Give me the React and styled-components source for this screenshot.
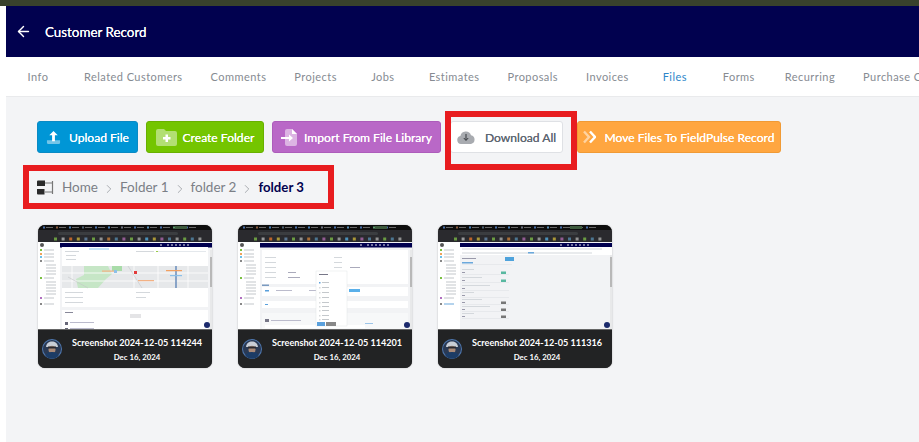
import React from 'react';
import styled, { createGlobalStyle } from 'styled-components';
import { ArrowLeft, ChevronRight } from 'lucide-react';

const TABS = ['Info', 'Related Customers', 'Comments', 'Projects', 'Jobs', 'Estimates', 'Proposals', 'Invoices', 'Files', 'Forms', 'Recurring', 'Purchase Orders'];

const FILES = [
    { name: 'Screenshot 2024-12-05 114244', date: 'Dec 16, 2024', shot: 'map' },
    { name: 'Screenshot 2024-12-05 114201', date: 'Dec 16, 2024', shot: 'form' },
    { name: 'Screenshot 2024-12-05 111316', date: 'Dec 16, 2024', shot: 'settings' },
];

const TAB_COLORS = ['#4a6fa5', '#8a5a3a', '#4a7fb5', '#50606f', '#4a6fa5', '#4a7fb5', '#6a6f7a', '#4a6fa5', '#5a8fb5', '#4a6fa5', '#60a070', '#4a6fa5'];
const BOOKMARKS = ['#7ab648', '#b5b5b5', '#e0702a', '#c9b13a', '#68a', '#7ab648', '#aaa', '#c9803a', '#58a', '#a6a', '#7ab648', '#aaa', '#5ad', '#c9b13a', '#a6a', '#58a', '#aaa', '#7ab648', '#58a', '#aaa'];
const SIDE_ROWS = [7, 11, 14, 18, 22, 25, 28, 31, 35, 39, 42, 45, 48, 51, 55, 61];

// small browser window drawn for the file previews
const Shot = ({ kind }) => (
    <ShotSvg viewBox="0 0 174 105" preserveAspectRatio="none">
        <defs>
            <filter id={`soft-${kind}`} x="0" y="0" width="100%" height="100%">
                <feGaussianBlur stdDeviation="0.45" />
            </filter>
        </defs>
        <g filter={`url(#soft-${kind})`}>
            <rect width="174" height="105" fill="#f2f3f5" />
            <rect width="174" height="17" fill="#2a2c2f" />
            <rect width="174" height="5" fill="#0d0e10" />
            {TAB_COLORS.map((c, i) => (
                <g key={i}>
                    <rect x={5 + i * 13} y="1.500" width="2" height="2" fill={c} />
                    <rect x={8 + i * 13} y="2" width="7" height="1" fill="#666" />
                </g>
            ))}
            <rect x={kind === 'settings' ? 132 : 137} y="1" width="12" height="3" fill="#3d5a3d" />
            <rect x="20" y="7" width="120" height="3" rx="1.500" fill="#3a3d40" />
            {BOOKMARKS.map((c, i) => (
                <rect key={i} x={16 + i * 7.600} y="12.500" width="3" height="3" fill={c} fillOpacity=".8" />
            ))}
            <rect x="22" y="18" width="152" height="4.500" fill="#01014f" />
            {[120, 127, 131, 135, 139, 143, 147].map(x => (
                <rect key={x} x={x + 2} y="19" width="2" height="2" rx="1" fill="#9a9ab8" />
            ))}
            <rect x="0" y="17" width="22" height="88" fill="#fff" />
            <circle cx="4" cy="20" r="2" fill="#555" />
            {SIDE_ROWS.map((y, i) => {
                const icon = [0, 1, 2, 3, 8, 14, 15].indexOf(i);
                return (
                    <g key={y}>
                        {icon >= 0 && (
                            <rect x="2" y={y + 17} width="2" height="2" fill={['#7ac043', '#f0a35a', '#6cc0e8', '#888', '#7ac043', '#b070c0', '#888'][icon]} />
                        )}
                        <rect x={icon >= 0 ? 6 : 8} y={y + 17.500} width="10" height="1" fill={kind === 'settings' && i === 15 ? '#6aa8dc' : '#c4c8cc'} />
                    </g>
                );
            })}
            <rect x="172" y="25" width="2" height="80" fill="#e8e9ea" />
            <rect x="172" y="32" width="2" height="30" fill="#b8b8b8" />
            {kind === 'map' && (
                <g>
                    <rect x="24" y="22" width="146" height="60" fill="#fff" />
                    <rect x="27" y="26" width="14" height="1" fill="#d4d8dc" />
                    <rect x="28" y="30" width="10" height="1" fill="#d4d8dc" />
                    <rect x="28" y="34" width="10" height="1" fill="#d4d8dc" />
                    <rect x="51" y="23.500" width="20" height="1" fill="#8cc8ee" />
                    <rect x="98" y="26" width="18" height="1" fill="#d4d8dc" />
                    <rect x="118" y="26" width="50" height="1" fill="#e4e8ec" />
                    <rect x="118" y="26" width="2" height="1" fill="#9c4" />
                    <rect x="24" y="41" width="146" height="22" fill="#e6e8ea" />
                    <path d="M46 41h24l4 8-6 5-8 9H40l-2-9 8-4z" fill="#c6e6c6" />
                    <rect x="74" y="41" width="10" height="5" fill="#a9dca9" />
                    <path d="M24 48h146M24 56h146M34 41v22M96 41v22M120 41v22M150 41v22" stroke="#fff" strokeWidth="0.800" />
                    <path d="M138 41v22" stroke="#5f86b8" strokeWidth="1.400" />
                    <path d="M30 52l20 11M90 41l14 22" stroke="#c4c6c8" strokeWidth="0.600" />
                    <rect x="64" y="45.500" width="12" height="1.200" fill="#f2b184" />
                    <rect x="100" y="55" width="16" height="1.200" fill="#f2b184" />
                    <rect x="128" y="45" width="16" height="1.200" fill="#f2a060" />
                    <rect x="132" y="50" width="12" height="1.200" fill="#8cc0e8" />
                    <rect x="76" y="45" width="3" height="3" fill="#8cc0e8" />
                    <rect x="96" y="46" width="3" height="3" fill="#e23b3b" />
                    <rect x="27" y="67" width="18" height="1" fill="#d4d8dc" />
                    <rect x="27" y="72" width="18" height="1" fill="#d4d8dc" />
                    <rect x="27" y="77" width="18" height="1" fill="#d4d8dc" />
                    <rect x="98" y="67" width="14" height="1" fill="#d4d8dc" />
                    <rect x="98" y="72" width="10" height="1" fill="#d4d8dc" />
                    <rect x="24" y="85" width="146" height="20" fill="#fff" />
                    <rect x="27" y="87" width="8" height="1" fill="#889" />
                    <rect x="92" y="89" width="11" height="4" fill="#e4e4e6" />
                    <rect x="27" y="97" width="3" height="3" fill="#667" />
                    <rect x="32" y="97" width="24" height="1" fill="#bbc" />
                    <rect x="27" y="103" width="3" height="2" fill="#667" />
                    <rect x="32" y="103" width="24" height="1" fill="#bbc" />
                </g>
            )}
            {kind === 'form' && (
                <g>
                    <rect x="24" y="25" width="146" height="34" fill="#fff" />
                    {[32, 37, 42, 47, 52].map(y => (
                        <g key={y}>
                            <rect x="27" y={y} width="11" height="1" fill="#d4d8dc" />
                            <rect x="96" y={y} width="8" height="1" fill="#d4d8dc" />
                        </g>
                    ))}
                    <rect x="50" y="47" width="8" height="1" fill="#aab" />
                    <rect x="50" y="52" width="12" height="1" fill="#aab" />
                    <rect x="112" y="42" width="10" height="1" fill="#aab" />
                    <rect x="24" y="62" width="146" height="9" fill="#fff" />
                    <rect x="24" y="59.500" width="7" height="1.500" fill="#7a9ac0" />
                    <rect x="27" y="65" width="4" height="1.500" fill="#5aa0dc" />
                    <rect x="38" y="65" width="16" height="1" fill="#bbc" />
                    <rect x="71" y="65" width="8" height="1" fill="#bbc" />
                    <rect x="111" y="64" width="11" height="3" fill="#5ab0ea" />
                    <rect x="24" y="76" width="146" height="7" fill="#fff" />
                    <rect x="27" y="79" width="3" height="1" fill="#5aa0dc" />
                    <rect x="24" y="88" width="146" height="17" fill="#f7f8f9" />
                    <rect x="27" y="94" width="4" height="3" fill="#778" />
                    <rect x="33" y="95" width="30" height="1" fill="#bbc" />
                    <rect x="27" y="100" width="100" height="3" fill="#fff" />
                    <rect x="78" y="46" width="31" height="55" fill="#fff" stroke="#dcdfe2" strokeWidth="0.400" />
                    <rect x="81" y="49" width="9" height="1" fill="#778" />
                    {[57, 62, 67, 72, 77, 81, 85, 90, 94].map(y => (
                        <g key={y}>
                            <rect x="81" y={y} width="1.500" height="1.500" fill={y === 57 ? '#5aa0dc' : '#d8dadc'} />
                            <rect x="84" y={y} width="7" height="1" fill="#c4c8cc" />
                        </g>
                    ))}
                    <rect x="79" y="97" width="8" height="4" fill="#5aa0dc" />
                    <rect x="88" y="97" width="10" height="4" fill="#888" />
                    <rect x="127" y="98" width="8" height="1" fill="#9cc4e8" />
                </g>
            )}
            {kind === 'settings' && (
                <g>
                    <rect x="22" y="22" width="152" height="8" fill="#fff" />
                    <rect x="24" y="23.500" width="140" height="1" fill="#d4d8dc" />
                    <rect x="24" y="27.500" width="130" height="1" fill="#d4d8dc" />
                    <rect x="90" y="27" width="6" height="1.500" fill="#6aa8dc" />
                    <rect x="24" y="33" width="14" height="1" fill="#99a" />
                    <rect x="67" y="32" width="9" height="4" fill="#4fa3dc" />
                    <rect x="24" y="37" width="11" height="1.500" fill="#6aa8dc" />
                    <rect x="24" y="39.500" width="50" height="0.500" fill="#dcdfe2" />
                    {[44, 52, 60, 67, 74, 81, 88].map((y, i) => (
                        <g key={y}>
                            <rect x="24" y={y} width={12 + (i % 3) * 8} height="1" fill="#d4d8dc" />
                            <rect x="24" y={y + 3} width="3" height="1" fill="#99a" />
                            <rect x="24" y={y + 5} width="47" height="0.500" fill="#dcdfe2" />
                            {i < 2 && <rect x="63" y={y + 2.500} width="5" height="2.500" fill="#58b8a0" />}
                            {i >= 4 && <rect x="63" y={y + 2.500} width="5" height="2.500" fill="#777" />}
                        </g>
                    ))}
                </g>
            )}
            <circle cx="169" cy="100" r="3" fill="#1a2a6c" />
            <rect x="0" y="104" width="174" height="1.500" fill="#666" />
        </g>
    </ShotSvg>
);

const Avatar = () => (
    <AvatarSvg width="20" height="20" viewBox="0 0 20 20">
        <circle cx="10" cy="10" r="10" fill="#4f78b0" />
        <circle cx="10" cy="10" r="9" fill="#2a3a55" />
        <path d="M4 8C4.500 4 7 2.500 10 2.500S15.500 4 16 8z" fill="#c9ced6" />
        <ellipse cx="10" cy="10.500" rx="3.500" ry="3.800" fill="#a98a78" />
        <path d="M6 7.500h8v2H6z" fill="#2a2a30" />
        <path d="M3.500 17c1-3.500 3.500-4 6.500-4s5.500.5 6.500 4a9 9 0 0 1-13 0z" fill="#1c3c66" />
    </AvatarSvg>
);

export default function App() {
    return (
        <>
            <GlobalStyle />
            <TopStrip />
            <Page>
                <Header>
                    <BackIcon size={17} strokeWidth={2} />
                    <HeaderTitle>Customer Record</HeaderTitle>
                </Header>
                <Tabs>
                    {TABS.map(tab => (
                        <Tab key={tab} $active={tab === 'Files'}>{tab}</Tab>
                    ))}
                </Tabs>
                <Content>
                    <Toolbar>
                        <ActionButton $bg="#0096d6" $border="#0a8ac4" $width={101}>
                            <svg width="15" height="15" viewBox="0 0 16 16">
                                <path d="M1 11h14v2.500A1.500 1.500 0 0 1 13.500 15h-11A1.500 1.500 0 0 1 1 13.500z" fill="#fff" fillOpacity=".45" />
                                <path d="M8 1l4.500 4.500H9.500V12h-3V5.500h-3z" fill="#fff" />
                            </svg>
                            Upload File
                        </ActionButton>
                        <ActionButton $bg="#74c500" $border="#68b000" $gap={6} $width={118}>
                            <svg width="21" height="17" viewBox="0 0 21 17">
                                <path d="M0 2a2 2 0 0 1 2-2h6l2 2h9a2 2 0 0 1 2 2v11a2 2 0 0 1-2 2H2a2 2 0 0 1-2-2z" fill="#fff" fillOpacity=".45" />
                                <path d="M9.500 5.500h2.500V8h2.500v2.500H12V13H9.500v-2.500H7V8h2.500z" fill="#fff" />
                            </svg>
                            Create Folder
                        </ActionButton>
                        <ActionButton $bg="#b968c7" $border="#ad5cbb" $gap={7} $width={169}>
                            <svg width="16" height="17" viewBox="0 0 16 17">
                                <path d="M4 2a2 2 0 0 1 2-2h5l5 5v10a2 2 0 0 1-2 2H6a2 2 0 0 1-2-2z" fill="#fff" fillOpacity=".5" />
                                <path d="M11 0l5 5h-5z" fill="#fff" />
                                <path d="M0 8h8V5.500L12 9l-4 3.500V10H0z" fill="#fff" />
                            </svg>
                            Import From File Library
                        </ActionButton>
                        <ActionButton $bg="#fff" $border="#dfe1e5" $color="#5f6773" $gap={10} $ml={9} $width={113}>
                            <svg width="18" height="14" viewBox="0 0 18 14">
                                <path d="M4 14a4 4 0 0 1-.6-7.900A5.500 5.500 0 0 1 14 5.200 4.500 4.500 0 0 1 14 14z" fill="#a8abb0" />
                                <path d="M9 4v6M6.800 8L9 10.500 11.200 8" fill="none" stroke="#33363b" strokeWidth="1" />
                            </svg>
                            Download All
                        </ActionButton>
                        <ActionButton $bg="#ffa640" $border="#f09a35" $gap={8} $ml={14} $width={204}>
                            <svg width="13" height="14" viewBox="0 0 13 14">
                                <path d="M1 1.500L6 7l-5 5.500" fill="none" stroke="#fff" strokeOpacity=".5" strokeWidth="2.400" />
                                <path d="M7 1.500L12 7l-5 5.500" fill="none" stroke="#fff" strokeWidth="2.400" />
                            </svg>
                            Move Files To FieldPulse Record
                        </ActionButton>
                    </Toolbar>
                    <Breadcrumbs>
                        <svg width="17" height="15" viewBox="0 0 17 15">
                            <path d="M0 1.500A1 1 0 0 1 1 .5h7v5.500H0zM0 9h7.500v5.500H1a1 1 0 0 1-1-1z" fill="#2b2b2b" />
                            <path d="M8 3h7.500v9H8M15.500 1v3M15.500 11v3" fill="none" stroke="#777" strokeWidth="1.200" />
                        </svg>
                        <Crumb $first>Home</Crumb>
                        <CrumbSep size={14} strokeWidth={1.200} />
                        <Crumb>Folder 1</Crumb>
                        <CrumbSep size={14} strokeWidth={1.200} />
                        <Crumb>folder 2</Crumb>
                        <CrumbSep size={14} strokeWidth={1.200} />
                        <CurrentCrumb>folder 3</CurrentCrumb>
                    </Breadcrumbs>
                    <FileGrid>
                        {FILES.map(file => (
                            <FileCard key={file.name}>
                                <Shot kind={file.shot} />
                                <FileFooter>
                                    <Avatar />
                                    <FileText>
                                        <FileName>{file.name}</FileName>
                                        <FileDate>{file.date}</FileDate>
                                    </FileText>
                                </FileFooter>
                            </FileCard>
                        ))}
                    </FileGrid>
                </Content>
            </Page>
            <RedBox $left={445} $top={111} $width={132} $height={59} />
            <RedBox $left={23} $top={165} $width={311} $height={44} />
        </>
    );
}

const GlobalStyle = createGlobalStyle`
    html, body {
        margin: 0;
        height: 100%;
        background: #fff;
        overflow: hidden;
    }
    body {
        font-family: "Lato", "Open Sans", sans-serif;
    }
    * {
        box-sizing: border-box;
    }
`;

const TopStrip = styled.div`
    height: 6px;
    background: #38412c;
`;

const Page = styled.div`
    margin-left: 6px;
    height: 436px;
    display: flex;
    flex-direction: column;
    overflow: hidden;
`;

const Header = styled.header`
    height: 51px;
    flex: none;
    background: #01014f;
    display: flex;
    align-items: center;
    padding-left: 9px;
    color: #fff;
`;

const BackIcon = styled(ArrowLeft)`
    flex: none;
`;

const HeaderTitle = styled.span`
    margin-left: 13px;
    font-size: 13.400px;
    text-shadow: 0 0 0.5px currentColor;
`;

const Tabs = styled.nav`
    height: 40px;
    flex: none;
    background: #fff;
    border-bottom: 1px solid #e9eaec;
    display: flex;
    overflow: hidden;
`;

const Tab = styled.a`
    flex: none;
    min-width: 64px;
    padding: 0 14px;
    height: 40px;
    display: flex;
    align-items: center;
    justify-content: center;
    font-size: 11px;
    letter-spacing: 0.45px;
    color: ${props => props.$active ? '#2e86c9' : '#868b92'};
    border-bottom: 1px solid ${props => props.$active ? '#5dade2' : 'transparent'};
`;

const Content = styled.main`
    flex: 1;
    background: #f3f4f6;
    padding: 24px 0 0 31px;
`;

const Toolbar = styled.div`
    display: flex;
    gap: 8px;
`;

const ActionButton = styled.button`
    width: ${props => props.$width}px;
    height: 32px;
    padding: 0;
    display: flex;
    align-items: center;
    justify-content: center;
    gap: ${props => props.$gap || 8}px;
    margin-left: ${props => props.$ml ? props.$ml - 8 : 0}px;
    background: ${props => props.$bg};
    border: 1px solid ${props => props.$border};
    border-radius: 3px;
    color: ${props => props.$color || '#fff'};
    font-family: inherit;
    font-size: 12.100px;
    text-shadow: 0 0 0.5px currentColor;
    white-space: nowrap;

    svg {
        flex: none;
    }
`;

const Breadcrumbs = styled.div`
    display: flex;
    align-items: center;
    height: 30px;
    margin-top: 19px;
`;

const Crumb = styled.span`
    margin-left: ${props => props.$first ? 8 : 0}px;
    font-size: 13.500px;
    color: #7b7f86;
`;

const CurrentCrumb = styled.span`
    font-size: 13.200px;
    font-weight: 700;
    color: #01014f;
`;

const CrumbSep = styled(ChevronRight)`
    color: #8a8e94;
    margin: 3px 4px 0;
`;

const FileGrid = styled.div`
    display: flex;
    gap: 26px;
    margin-top: 23px;
    margin-left: 1px;
`;

const FileCard = styled.article`
    width: 174px;
    height: 143px;
    border-radius: 7px;
    overflow: hidden;
    background: #222;
    box-shadow: 0 0 2px rgba(0, 0, 0, 0.25);
`;

const ShotSvg = styled.svg`
    display: block;
    width: 174px;
    height: 105px;
`;

const FileFooter = styled.div`
    height: 38px;
    display: flex;
    align-items: center;
    padding: 0 0 0 4px;
    background: #222324;
`;

const AvatarSvg = styled.svg`
    flex: none;
`;

const FileText = styled.div`
    flex: 1;
    display: flex;
    flex-direction: column;
    align-items: center;
    color: #fff;
`;

const FileName = styled.div`
    font-size: 9.100px;
    font-weight: 700;
    white-space: nowrap;
`;

const FileDate = styled.div`
    font-size: 7.800px;
    font-weight: 700;
    margin-top: 4px;
`;

const RedBox = styled.div`
    position: absolute;
    left: ${props => props.$left}px;
    top: ${props => props.$top}px;
    width: ${props => props.$width}px;
    height: ${props => props.$height}px;
    border: 6px solid #e81c1f;
`;
